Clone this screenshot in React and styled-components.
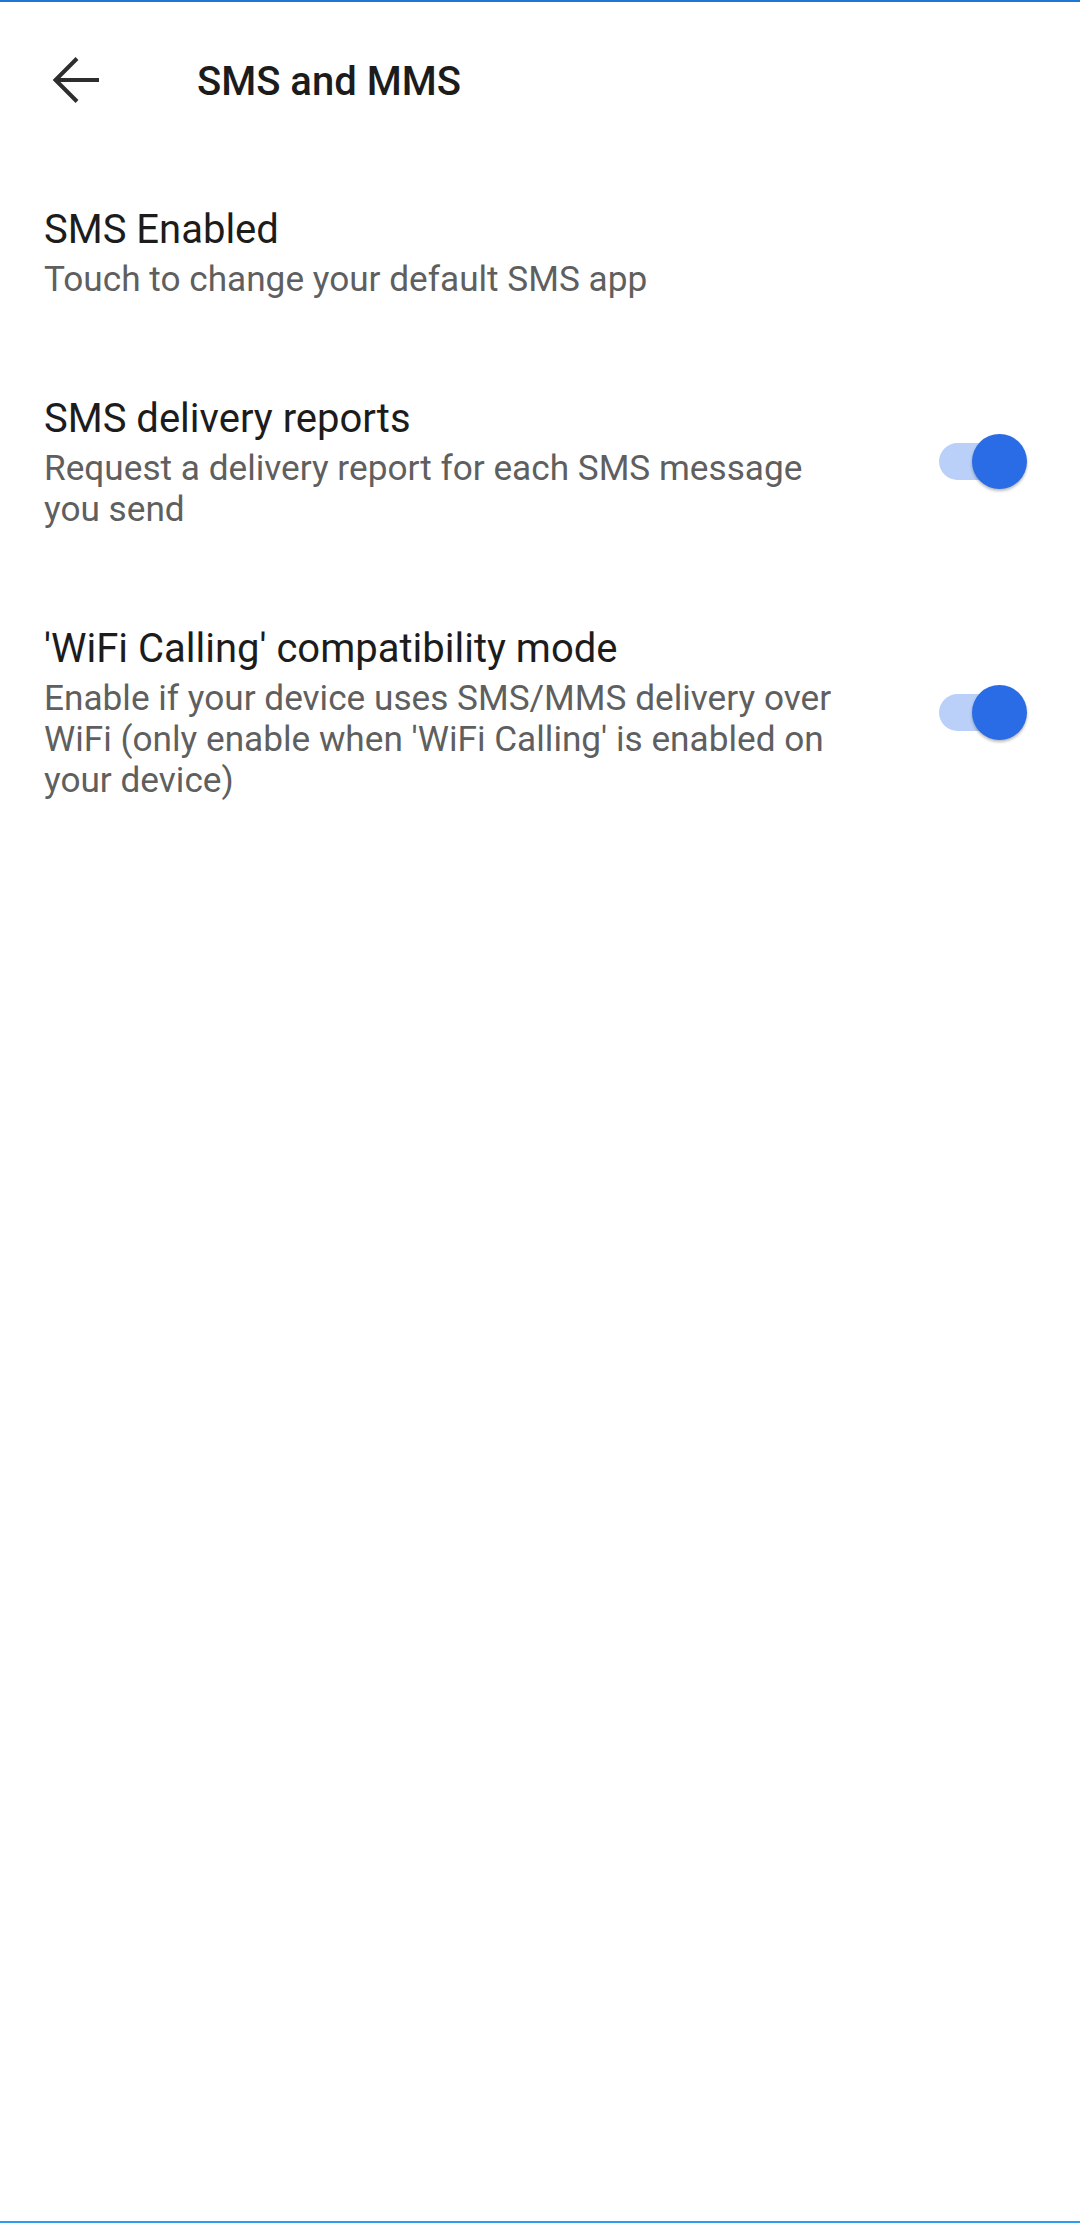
import React, { useState } from "react";
import styled, { createGlobalStyle } from "styled-components";

const GlobalStyle = createGlobalStyle`
  html, body {
    margin: 0;
    padding: 0;
    background: #ffffff;
  }
  body {
    font-family: Roboto, "Noto Sans", "Liberation Sans", sans-serif;
    -webkit-font-smoothing: antialiased;
  }
`;

const settings = [
  {
    id: "enabled",
    title: "SMS Enabled",
    summary: "Touch to change your default SMS app",
  },
  {
    id: "reports",
    title: "SMS delivery reports",
    summary: "Request a delivery report for each SMS message you send",
    toggle: true,
  },
  {
    id: "wifi",
    title: "'WiFi Calling' compatibility mode",
    summary:
      "Enable if your device uses SMS/MMS delivery over WiFi (only enable when 'WiFi Calling' is enabled on your device)",
    toggle: true,
  },
];

const App = () => {
  const [checked, setChecked] = useState({ reports: true, wifi: true });

  const flip = (id) => setChecked((prev) => ({ ...prev, [id]: !prev[id] }));

  return (
    <Screen>
      <GlobalStyle />
      <Edge color="#1e77d5" />
      <Toolbar>
        <BackButton aria-label="Back">
          <svg width="48" height="48" viewBox="0 0 48 48" fill="none">
            <path d="M3.5 24H47" stroke="#2e2e2e" strokeWidth="4" />
            <path
              d="M25 2.5L3.5 24L25 45.5"
              stroke="#2e2e2e"
              strokeWidth="4"
              strokeLinejoin="miter"
            />
          </svg>
        </BackButton>
        <Title>SMS and MMS</Title>
      </Toolbar>

      <List>
        {settings.map((item) => (
          <Row key={item.id} onClick={() => item.toggle && flip(item.id)}>
            <TextBlock>
              <RowTitle>{item.title}</RowTitle>
              <Summary>{item.summary}</Summary>
            </TextBlock>
            {item.toggle && (
              <Switch>
                <Track on={checked[item.id]} />
                <Thumb on={checked[item.id]} />
              </Switch>
            )}
          </Row>
        ))}
      </List>

      <Edge color="#2c9cf0" />
    </Screen>
  );
};

const Screen = styled.div`
  display: flex;
  flex-direction: column;
  min-height: 2223px;
  background: #ffffff;
`;

const Edge = styled.div`
  height: 2px;
  flex-shrink: 0;
  background: ${({ color }) => color};
`;

const Toolbar = styled.header`
  display: flex;
  align-items: center;
  height: 155px;
  padding-left: 52px;
`;

const BackButton = styled.div`
  width: 48px;
  height: 48px;
  display: flex;
  cursor: pointer;
`;

const Title = styled.h1`
  margin: 0 0 0 97px;
  padding-top: 4px;
  font-size: 40px;
  line-height: 48px;
  font-weight: 500;
  color: #1c1c1c;
`;

const List = styled.div`
  flex: 1;
  display: flex;
  flex-direction: column;
`;

const Row = styled.div`
  display: flex;
  align-items: center;
  padding: 47px 53px 46px 44px;
  cursor: pointer;
`;

const TextBlock = styled.div`
  flex: 1;
  min-width: 0;
  display: flex;
  flex-direction: column;
`;

const RowTitle = styled.div`
  font-size: 40px;
  line-height: 52px;
  color: #1c1c1c;
`;

const Summary = styled.div`
  margin-top: 3px;
  font-size: 35.2px;
  line-height: 41px;
  color: #5f5f5f;
`;

const Switch = styled.div`
  position: relative;
  flex-shrink: 0;
  width: 88px;
  height: 55px;
  margin-left: 84px;
`;

const Track = styled.div`
  position: absolute;
  left: 0;
  top: 9px;
  width: 80px;
  height: 37px;
  border-radius: 19px;
  background: ${({ on }) => (on ? "#bad0f8" : "#bdbdbd")};
`;

const Thumb = styled.div`
  position: absolute;
  top: 0;
  ${({ on }) => (on ? "right: 0;" : "left: 0;")}
  width: 55px;
  height: 55px;
  border-radius: 50%;
  background: ${({ on }) => (on ? "#2a6be6" : "#f5f5f5")};
  box-shadow: 0 2px 3px rgba(0, 0, 0, 0.28);
`;

export default App;
